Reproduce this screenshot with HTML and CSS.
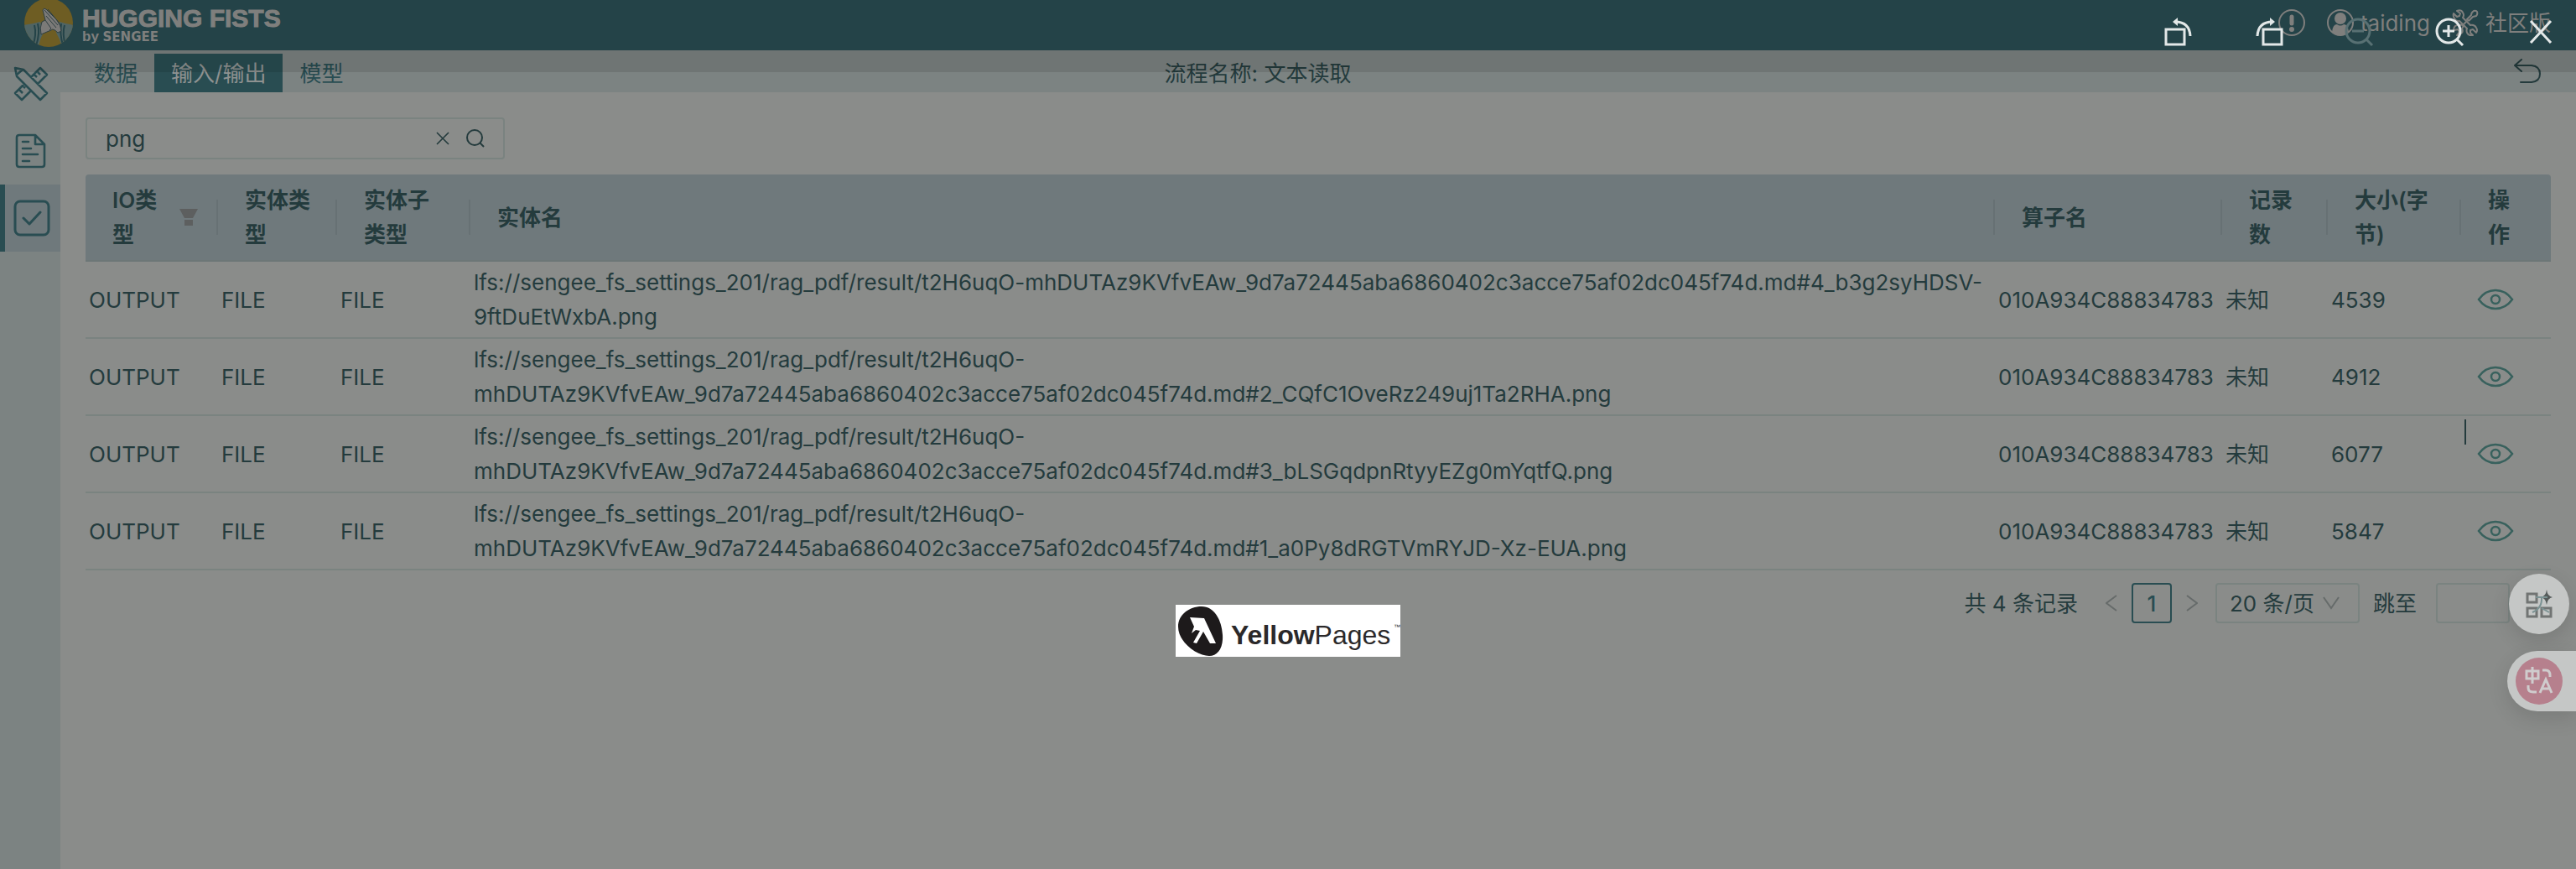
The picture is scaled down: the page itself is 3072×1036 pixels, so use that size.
FILE: index.html
```html
<!DOCTYPE html>
<html lang="zh-CN">
<head>
<meta charset="utf-8">
<title>HUGGING FISTS</title>
<link rel="stylesheet" href="styles.css">
</head>
<body>
<header class="header">
  <a class="brand" href="#">
    <svg class="brand-mark" viewBox="0 0 60 60" aria-hidden="true">
      <defs><clipPath id="disc"><circle cx="30" cy="30" r="29"/></clipPath></defs>
      <g clip-path="url(#disc)">
        <rect width="60" height="60" fill="#7b6828"/>
        <path d="M0 33 Q12 31 20 29 L24 42 Q19 50 18 60 H0Z M60 33 Q50 31 43 29 L39 42 Q44 50 46 60 H60Z" fill="#587070"/>
        <path d="M13 33Q16 44 11 58M17 31Q20 42 15 58M49 33Q46 43 50 57M45 31Q43 43 47 57" stroke="#294b51" stroke-width="2" fill="none"/>
        <path d="M22 29 L26 27 L23 15 Q24 12 27 14 L40 27 Q45 34 45 40 L41 42 Q35 36 33 39 L28 41 L21 44 Q19 36 22 29Z" fill="#8a8886" stroke="#34474a"/>
        <path d="M26 27L33 37L31 39M25 15L41 33M27 22L39 36M29 14L43 31" stroke="#34474a" fill="none"/>
      </g>
    </svg>
    <span class="brand-text">
      <span class="brand-name">HUGGING FISTS</span>
      <span class="brand-by">by <span class="brand-org">SENGEE</span></span>
    </span>
  </a>
  <nav class="account">
    <svg class="notice" viewBox="0 0 32 32" fill="none" stroke="currentColor"><circle cx="16" cy="16" r="15" stroke-width="2"/><path d="M16 9v8" stroke-width="5" stroke-linecap="round"/><circle cx="16" cy="24" r="3" fill="currentColor" stroke="none"/></svg>
    <a class="account-link user" href="#">
      <svg viewBox="0 0 32 32" fill="none" stroke="currentColor"><circle cx="16" cy="16" r="15" stroke-width="2"/><circle cx="16" cy="11" r="7" fill="currentColor" stroke="none"/><path d="M6 27Q7 18 12 18Q16 21 20 18Q25 18 26 27Q22 31 16 31T6 27Z" fill="currentColor" stroke="none"/></svg>
      taiding</a>
    <a class="account-link" href="#">
      <svg viewBox="0 0 32 32" fill="none" stroke="currentColor" stroke-width="2" stroke-linejoin="round"><path d="M2 5L6 9L9 8L10 5L6 2Q11 0 13 4Q15 7 13 10L22 19Q27 18 29 22Q31 25 29 28L25 24L22 25L22 28L25 31Q20 32 18 28Q17 25 18 23L9 14Q5 15 3 11Q1 8 2 5Z"/><path d="M20 14L18 12L23 7Q23 4 26 2Q29 1 30 3Q31 6 29 8L25 9L20 14M12 18L14 20L12 23Q14 27 11 29Q9 31 6 31L9 27L7 24L3 25Q1 23 4 20Q7 18 10 19ZM18 14L12 20"/></svg>
      社区版</a>
  </nav>
</header>

<div class="body">
  <aside class="sidebar">
    <a class="side-item" href="#" aria-label="设计">
      <svg viewBox="0 0 40 40" fill="none" stroke="currentColor" stroke-width="2.5" stroke-linejoin="round"><path d="M1 1L11 3L39 31L31 39L3 11ZM3 9L10 3M20 12L31 1L39 9L28 20M24 9L27 12M28 6L31 9M12 20L1 31L9 39L20 28M6 27L10 31M10 22L13 25"/></svg>
    </a>
    <a class="side-item" href="#" aria-label="文档">
      <svg viewBox="0 0 40 40" fill="none" stroke="currentColor" stroke-width="3" stroke-linejoin="round" stroke-linecap="round"><path d="M6 1H25L36 12V36Q36 39 33 39H6Q3 39 3 36V4Q3 1 6 1ZM25 1V12H36M10 9H17M10 17H20M10 24H28M10 32H18" stroke-width="2.6"/></svg>
    </a>
    <a class="side-item side-item-active" href="#" aria-label="结果">
      <svg viewBox="0 0 40 40" fill="none" stroke="currentColor" stroke-width="3" stroke-linecap="round" stroke-linejoin="round"><rect x="1" y="0" width="40" height="40" rx="6"/><path d="M11 20L18 27L31 13"/></svg>
    </a>
  </aside>

  <main class="main">
    <div class="tabbar">
      <div class="tabs">
        <button class="tab" type="button">数据</button>
        <button class="tab tab-active" type="button">输入/输出</button>
        <button class="tab" type="button">模型</button>
      </div>
      <span class="flow-name">流程名称: 文本读取</span>
      <button class="back" type="button" aria-label="返回">
        <svg viewBox="0 0 32 30" fill="none" stroke="currentColor" stroke-width="2" stroke-linecap="round" stroke-linejoin="round"><path d="M9 1L1 8L9 15M1 8H21Q31 9 31 18T21 28H8"/></svg>
      </button>
    </div>

    <section class="content">
      <div class="search">
        <input class="search-input" type="text" value="png" aria-label="搜索">
        <button class="icon-btn" type="button" aria-label="清除"><svg class="clear" viewBox="0 0 16 16" fill="none" stroke="currentColor" stroke-width="1.6"><path d="M1 1L15 15M15 1L1 15"/></svg></button>
        <button class="icon-btn" type="button" aria-label="查找"><svg class="find" viewBox="0 0 22 22" fill="none" stroke="currentColor" stroke-width="2"><circle cx="10" cy="10" r="9"/><path d="M16 16L21 21"/></svg></button>
      </div>

      <table class="table">
        <colgroup><col class="c-io"><col class="c-type"><col class="c-sub"><col><col class="c-op"><col class="c-rec"><col class="c-size"><col class="c-act"></colgroup>
        <thead>
          <tr>
            <th><div class="th-filter"><span>IO类型</span><svg viewBox="0 0 22 20" fill="currentColor"><path d="M0 0H22L16 11H6ZM6 13H16V20H6Z"/></svg></div></th>
            <th>实体类型</th>
            <th>实体子类型</th>
            <th>实体名</th>
            <th>算子名</th>
            <th>记录数</th>
            <th>大小(字节)</th>
            <th>操作</th>
          </tr>
        </thead>
        <tbody>
          <tr><td>OUTPUT</td><td>FILE</td><td>FILE</td><td>lfs://sengee_fs_settings_201/rag_pdf/result/t2H6uqO-mhDUTAz9KVfvEAw_9d7a72445aba6860402c3acce75af02dc045f74d.md#4_b3g2syHDSV-<br>9ftDuEtWxbA.png</td><td>010A934C88834783</td><td>未知</td><td>4539</td><td><button class="view" type="button" aria-label="查看"><svg viewBox="0 0 44 24"><path d="M2 12Q10 1 22 1T42 12Q34 23 22 23T2 12Z"/><circle cx="22" cy="12" r="5"/></svg></button></td></tr>
          <tr><td>OUTPUT</td><td>FILE</td><td>FILE</td><td>lfs://sengee_fs_settings_201/rag_pdf/result/t2H6uqO-<br>mhDUTAz9KVfvEAw_9d7a72445aba6860402c3acce75af02dc045f74d.md#2_CQfC1OveRz249uj1Ta2RHA.png</td><td>010A934C88834783</td><td>未知</td><td>4912</td><td><button class="view" type="button" aria-label="查看"><svg viewBox="0 0 44 24"><path d="M2 12Q10 1 22 1T42 12Q34 23 22 23T2 12Z"/><circle cx="22" cy="12" r="5"/></svg></button></td></tr>
          <tr><td>OUTPUT</td><td>FILE</td><td>FILE</td><td>lfs://sengee_fs_settings_201/rag_pdf/result/t2H6uqO-<br>mhDUTAz9KVfvEAw_9d7a72445aba6860402c3acce75af02dc045f74d.md#3_bLSGqdpnRtyyEZg0mYqtfQ.png</td><td>010A934C88834783</td><td>未知</td><td>6077</td><td class="caret-cell"><span class="caret"></span><button class="view" type="button" aria-label="查看"><svg viewBox="0 0 44 24"><path d="M2 12Q10 1 22 1T42 12Q34 23 22 23T2 12Z"/><circle cx="22" cy="12" r="5"/></svg></button></td></tr>
          <tr><td>OUTPUT</td><td>FILE</td><td>FILE</td><td>lfs://sengee_fs_settings_201/rag_pdf/result/t2H6uqO-<br>mhDUTAz9KVfvEAw_9d7a72445aba6860402c3acce75af02dc045f74d.md#1_a0Py8dRGTVmRYJD-Xz-EUA.png</td><td>010A934C88834783</td><td>未知</td><td>5847</td><td><button class="view" type="button" aria-label="查看"><svg viewBox="0 0 44 24"><path d="M2 12Q10 1 22 1T42 12Q34 23 22 23T2 12Z"/><circle cx="22" cy="12" r="5"/></svg></button></td></tr>
        </tbody>
      </table>

      <div class="pager">
        <span class="pager-total">共 4 条记录</span>
        <button class="page-btn page-nav" type="button" aria-label="上一页"><svg viewBox="0 0 14 20"><path d="M13 1L1 10L13 19"/></svg></button>
        <button class="page-btn page-current" type="button">1</button>
        <button class="page-btn page-nav" type="button" aria-label="下一页"><svg viewBox="0 0 14 20"><path d="M1 1L13 10L1 19"/></svg></button>
        <span class="size-box">
          <select class="size-select" aria-label="每页条数"><option>20 条/页</option></select>
          <svg class="size-arrow" viewBox="0 0 20 16"><path d="M1 1L10 14L19 1"/></svg>
        </span>
        <label class="jump">跳至 <input class="jump-input" type="text"> 页</label>
      </div>
    </section>
  </main>
</div>

<div class="preview">
  <svg class="preview-image" viewBox="0 0 268 62" role="img" aria-label="YellowPages">
    <rect width="268" height="62" fill="#fff"/>
    <path d="M31 2C46 2 55 18 56 36C57 52 50 61 40 61C26 61 3 45 3 26C3 12 16 2 31 2Z" fill="#1d1a1b"/>
    <path d="M17 15L34 16L48 46L41 46L33 32L25 46L21 45L29 31L24 30L19 34L22 26Z" fill="#fff"/>
    <text x="66" y="47" class="logo-text"><tspan class="logo-bold">Yellow</tspan><tspan>Pages</tspan></text>
    <text x="260" y="29" class="logo-tm">™</text>
  </svg>
</div>

<div class="preview-tools">
  <button class="tool" type="button" aria-label="向左旋转"><svg viewBox="0 0 36 36"><rect x="3" y="15" width="22" height="18"/><path d="M14 6Q31 6 32 23"/><path class="tip" d="M11 6L17 1V11Z"/></svg></button>
  <button class="tool" type="button" aria-label="向右旋转"><svg viewBox="0 0 36 36"><rect x="11" y="15" width="22" height="18"/><path d="M22 6Q5 6 4 23"/><path class="tip" d="M25 6L19 1V11Z"/></svg></button>
  <button class="tool tool-disabled" type="button" aria-label="缩小" disabled><svg viewBox="0 0 36 36"><circle cx="16" cy="17" r="14"/><path d="M9 17H23M26 27L33 34"/></svg></button>
  <button class="tool" type="button" aria-label="放大"><svg viewBox="0 0 36 36"><circle cx="16" cy="17" r="14"/><path d="M9 17H23M16 10V24M26 27L33 34"/></svg></button>
  <button class="tool" type="button" aria-label="关闭"><svg viewBox="0 0 36 36"><path d="M6 5L30 31M30 5L6 31"/></svg></button>
</div>

<div class="floaters">
  <button class="float-round" type="button" aria-label="应用">
    <svg viewBox="0 0 32 34" fill="none" stroke="#717473" stroke-width="3"><rect x="2" y="5" width="11" height="10"/><rect x="2" y="22" width="11" height="10"/><rect x="19" y="22" width="11" height="10"/><path d="M25 0Q26 8 32 9Q26 10 25 18Q24 10 18 9Q24 8 25 0Z" fill="#555b5a" stroke="none"/><path d="M12 9H26M19 9Q20 22 8 27M19 22L28 27" stroke="#7b9293" stroke-width="2"/></svg>
  </button>
  <button class="float-side" type="button" aria-label="翻译">
    <svg viewBox="0 0 56 56" fill="none" stroke="#cfcccd" stroke-width="3"><circle cx="28" cy="28" r="28" fill="#b6808d" stroke="none"/><path d="M13 16H27V25H13ZM20 11V31M32 15H36Q41 15 41 21V23M15 33V36Q15 41 21 41H25M29 42L36 26L43 42M32 37H40"/></svg>
  </button>
</div>
</body>
</html>
```
FILE: styles.css
```css
* { box-sizing: border-box; }

body {
  margin: 0;
  min-height: 100vh;
  display: flex;
  flex-direction: column;
  position: relative;
  background: #8a8c8a;
  color: #243b3d;
  font-family: Inter, "Noto Sans CJK SC", sans-serif;
  font-size: 26px;
  line-height: 41px;
}

button, input, select {
  font: inherit;
  color: inherit;
  background: none;
  border: 0;
  padding: 0;
  margin: 0;
}

a { color: inherit; text-decoration: none; }
svg { display: block; flex: none; }

/* Header */
.header {
  height: 60px;
  display: flex;
  justify-content: space-between;
  background: #294b51;
  color: #8e8e8c;
}
.brand { display: flex; gap: 10px; padding-left: 28px; }
.brand-mark { width: 60px; height: 60px; margin-top: -3px; }
.brand-text {
  display: flex;
  flex-direction: column;
  padding-top: 6px;
  font-family: "Liberation Sans", sans-serif;
  font-weight: 700;
}
.brand-name { font-size: 30px; line-height: 32px; -webkit-text-stroke: 1px currentColor; }
.brand-by { font-size: 17px; line-height: 12px; }
.brand-org { font-family: "DejaVu Sans", sans-serif; font-size: 15px; }
.account { display: flex; align-items: center; height: 54px; padding-right: 30px; gap: 26px; }
.account svg { width: 32px; height: 32px; }
.account-link { display: flex; align-items: center; gap: 8px; }

/* Sidebar */
.body { flex: 1; display: flex; }
.sidebar { width: 72px; background: #7c8382; color: #294d52; }
.side-item {
  height: 80px;
  display: flex;
  align-items: center;
  justify-content: center;
  border-left: 6px solid transparent;
  padding-right: 4px;
}
.side-item svg { width: 40px; height: 40px; overflow: visible; }
.side-item-active { background: #6f797c; border-left-color: #294d52; }

/* Tab bar */
.main { flex: 1; min-width: 0; }
.tabbar {
  height: 50px;
  display: grid;
  grid-template-columns: 1fr auto 1fr 144px;
  background: #7c8382;
}
.tabs { display: flex; align-items: flex-end; padding-left: 20px; }
.tab { height: 46px; padding: 0 20px; color: #294d52; }
.tab-active { background: #294d52; color: #8e9291; }
.flow-name { padding-top: 7px; }
.back { grid-column: 4; justify-self: end; align-self: start; padding: 10px 42px 0 0; }
.back svg { width: 32px; height: 30px; }

/* Search */
.content { padding: 30px 30px 0; }
.search {
  width: 500px;
  height: 50px;
  display: flex;
  align-items: center;
  gap: 20px;
  padding: 0 22px;
  margin-bottom: 18px;
  border: 2px solid #7a8380;
  border-radius: 4px;
}
.search-input { flex: 1; min-width: 0; outline: 0; }
.clear { width: 16px; height: 16px; }
.find { width: 22px; height: 22px; }

/* Table */
.table {
  width: 100%;
  table-layout: fixed;
  border-collapse: separate;
  border-spacing: 0;
}
.c-io { width: 158px; }
.c-type { width: 142px; }
.c-sub { width: 159px; }
.c-op { width: 271px; }
.c-rec { width: 126px; }
.c-size { width: 159px; }
.c-act { width: 107px; }
.table th {
  padding: 10px 32px;
  text-align: left;
  font-weight: 600;
  border-bottom: 2px solid #6d7777;
  background: linear-gradient(#677174, #677174) right center / 2px 42px no-repeat #6f797c;
}
.table th:nth-child(1), .table th:nth-child(2) { padding-right: 24px; }
.table th:first-child { border-top-left-radius: 4px; }
.table th:last-child { border-top-right-radius: 4px; background: #6f797c; }
.th-filter { display: flex; align-items: center; gap: 22px; }
.th-filter span { flex: 1; }
.th-filter svg { width: 22px; height: 20px; color: #5d5f5f; }
.table td {
  padding: 4px 0 4px 4px;
  border-bottom: 2px solid #7a8380;
  white-space: nowrap;
}
.view { display: block; margin-left: 15px; }
.view svg {
  width: 44px;
  height: 24px;
  fill: none;
  stroke: #38615d;
  stroke-width: 2.5;
  overflow: visible;
}
.caret-cell { position: relative; }
.caret { position: absolute; left: 4px; top: 4px; width: 2px; height: 30px; background: #243b3d; }

/* Pagination */
.pager { display: flex; align-items: center; justify-content: flex-end; padding-top: 15px; }
.pager-total { margin-right: 16px; }
.page-btn {
  width: 48px;
  height: 48px;
  display: flex;
  align-items: center;
  justify-content: center;
}
.page-nav svg { width: 14px; height: 20px; fill: none; stroke: #666b6a; stroke-width: 2; }
.page-current { border: 2px solid #294d52; border-radius: 4px; color: #294d52; font-weight: 500; }
.size-box {
  width: 172px;
  height: 48px;
  display: grid;
  align-items: center;
  margin: 0 16px 0 4px;
  border: 2px solid #7a8380;
  border-radius: 4px;
}
.size-select { grid-area: 1 / 1; appearance: none; padding-left: 15px; height: 44px; }
.size-arrow {
  grid-area: 1 / 1;
  justify-self: end;
  width: 20px;
  height: 16px;
  margin-right: 22px;
  fill: none;
  stroke: #666b6a;
  stroke-width: 2;
  pointer-events: none;
}
.jump { display: flex; align-items: center; gap: 23px; }
.jump-input { width: 88px; height: 48px; border: 2px solid #7a8380; border-radius: 4px; }

/* Image preview over the page */
.preview { position: absolute; inset: 0; display: flex; justify-content: center; align-items: flex-start; padding-top: 721px; }
.preview-image { width: 268px; height: 62px; }
.logo-text { font: 32px "Liberation Sans", sans-serif; fill: #2b292a; }
.logo-bold { font-weight: 700; }
.logo-tm { font: 8px "Liberation Sans", sans-serif; fill: #2b292a; }

.preview-tools {
  position: absolute;
  top: 0;
  left: 0;
  right: 0;
  height: 86px;
  display: flex;
  justify-content: flex-end;
  align-items: flex-start;
  gap: 72px;
  padding: 20px 24px;
  background: rgba(0, 0, 0, 0.1);
  color: #e3e8e8;
}
.tool svg { width: 36px; height: 36px; fill: none; stroke: currentColor; stroke-width: 3; }
.tool .tip { fill: currentColor; stroke: none; }
.tool-disabled { color: #587073; }

.floaters {
  position: absolute;
  right: 0;
  top: 684px;
  display: flex;
  flex-direction: column;
  align-items: flex-end;
  gap: 20px;
}
.float-round, .float-side {
  height: 72px;
  display: flex;
  align-items: center;
  background: #c5c7c6;
  box-shadow: 0 8px 24px rgba(0, 0, 0, 0.12);
}
.float-round { width: 72px; justify-content: center; border-radius: 50%; margin-right: 8px; }
.float-round svg { width: 32px; height: 34px; }
.float-side { width: 82px; padding-left: 10px; border-radius: 36px 0 0 36px; }
.float-side svg { width: 56px; height: 56px; }
```
